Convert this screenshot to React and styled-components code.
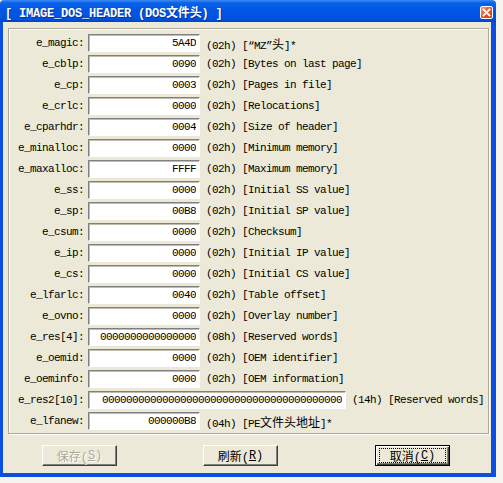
import React from 'react';
import styled, { createGlobalStyle } from 'styled-components';

const Global = createGlobalStyle`
  html, body { margin: 0; padding: 0; }
  body {
    background: #f4f3ee;
    width: 503px;
    height: 483px;
    overflow: hidden;
    font-family: "Liberation Mono", "Noto Sans CJK SC", monospace;
  }
`;

const Window = styled.div`
  width: 496px;
  height: 477px;
  display: flex;
  flex-direction: column;
`;

const TitleBar = styled.div`
  height: 22px;
  flex: 0 0 22px;
  box-sizing: border-box;
  display: flex;
  align-items: center;
  justify-content: space-between;
  padding: 1px 3px 0 5px;
  border-radius: 4px 4px 0 0;
  background: linear-gradient(#3a8cf6 0, #0a61e6 3px, #0057e6 45%, #0052de 85%, #0045cc 100%);
`;

const Title = styled.span`
  color: #fff;
  font-weight: bold;
  font-size: 12px;
  letter-spacing: -0.2px;
  white-space: pre;
  text-shadow: 1px 1px 0 #0a2f9c;
`;

const CloseBtn = styled.div`
  width: 13px;
  height: 13px;
  box-sizing: border-box;
  border: 1px solid #fff;
  border-radius: 2px;
  background: linear-gradient(135deg, #f29a7c, #e0522c 55%, #c53d18);
  display: flex;
  align-items: center;
  justify-content: center;
  margin-top: 2px;
`;

const Frame = styled.div`
  flex: 1;
  box-sizing: border-box;
  background: #ece9d8;
  border-style: solid;
  border-color: #0a4fe0;
  border-width: 0 5px 4px 3px;
  padding: 6px 2px 7px 5px;
  display: flex;
  flex-direction: column;
`;

const Group = styled.div`
  width: 481px;
  height: 406px;
  box-sizing: border-box;
  border: 1px solid #aca899;
  box-shadow: inset 1px 1px 0 #fff, 1px 1px 0 #fff;
  padding: 5px 0 3px 0;
  display: flex;
  flex-direction: column;
  gap: 3px;
`;

const Row = styled.div`
  display: flex;
  align-items: center;
  height: 18px;
  font-size: 11px;
  letter-spacing: -0.6px;
  color: #000;
  white-space: pre;
`;

const Label = styled.span`
  width: 75px;
  margin-right: 4px;
  text-align: right;
`;

const Field = styled.input`
  width: ${p => (p.$wide ? 258 : 112)}px;
  height: 18px;
  box-sizing: border-box;
  margin: 0 6px 0 0;
  padding: 0 3px 0 0;
  border-style: solid;
  border-width: 1px;
  border-color: #808080 #fff #fff #808080;
  box-shadow: inset 1px 1px 0 #c0bdb0;
  background: #fff;
  font-family: "Liberation Mono", monospace;
  font-size: 11px;
  letter-spacing: -0.6px;
  text-align: right;
  color: #000;
  outline: none;
`;

const Note = styled.span``;

const Cjk = styled.span`
  font-family: "Noto Sans CJK SC", sans-serif;
  font-size: 12px;
  letter-spacing: 0;
`;

const Buttons = styled.div`
  display: flex;
  margin-top: 11px;
  padding-left: 34px;
`;

const Btn = styled.button`
  width: 75px;
  height: 21px;
  box-sizing: border-box;
  margin: 0 0 0 ${p => p.$offset || 0}px;
  padding: 0;
  background: #ece9d8;
  border-style: solid;
  border-width: 1px;
  border-color: ${p => (p.$default ? '#000' : '#fff #404040 #404040 #fff')};
  box-shadow: ${p =>
    p.$default
      ? 'inset 1px 1px 0 #fff, inset -1px -1px 0 #404040, inset -2px -2px 0 #808080'
      : 'inset -1px -1px 0 #808080'};
  font-family: "Liberation Mono", "Noto Sans CJK SC", monospace;
  font-size: 12px;
  color: ${p => (p.disabled ? '#aca899' : '#000')};
  text-shadow: ${p => (p.disabled ? '1px 1px 0 #fff' : 'none')};
  display: flex;
  align-items: center;
  justify-content: center;
  white-space: pre;
`;

const Focus = styled.span`
  display: flex;
  align-items: center;
  justify-content: center;
  width: 65px;
  height: 13px;
  border: 1px dotted #000;
`;

const Key = styled.span`
  text-decoration: underline;
`;

const zeros = (n) => '0'.repeat(n);

// wrap the chinese parts so they keep their full 12px cell
const withCjk = (text) =>
  text.split(/([\u4e00-\u9fff]+)/).map((part, i) =>
    i % 2 ? <Cjk key={i}>{part}</Cjk> : part
  );

const rows = [
  ['e_magic', '5A4D', '02h', '[“MZ”头]*'],
  ['e_cblp', '0090', '02h', '[Bytes on last page]'],
  ['e_cp', '0003', '02h', '[Pages in file]'],
  ['e_crlc', '0000', '02h', '[Relocations]'],
  ['e_cparhdr', '0004', '02h', '[Size of header]'],
  ['e_minalloc', '0000', '02h', '[Minimum memory]'],
  ['e_maxalloc', 'FFFF', '02h', '[Maximum memory]'],
  ['e_ss', '0000', '02h', '[Initial SS value]'],
  ['e_sp', '00B8', '02h', '[Initial SP value]'],
  ['e_csum', '0000', '02h', '[Checksum]'],
  ['e_ip', '0000', '02h', '[Initial IP value]'],
  ['e_cs', '0000', '02h', '[Initial CS value]'],
  ['e_lfarlc', '0040', '02h', '[Table offset]'],
  ['e_ovno', '0000', '02h', '[Overlay number]'],
  ['e_res[4]', zeros(16), '08h', '[Reserved words]'],
  ['e_oemid', '0000', '02h', '[OEM identifier]'],
  ['e_oeminfo', '0000', '02h', '[OEM information]'],
  ['e_res2[10]', zeros(40), '14h', '[Reserved words]', true],
  ['e_lfanew', '000000B8', '04h', '[PE文件头地址]*'],
];

export default function App() {
  return (
    <>
      <Global />
      <Window>
        <TitleBar>
          <Title>[ IMAGE_DOS_HEADER (DOS文件头) ]</Title>
          <CloseBtn>
            <svg width="9" height="9" viewBox="0 0 9 9">
              <path d="M1.5 1.5 L7.5 7.5 M7.5 1.5 L1.5 7.5" stroke="#fff" strokeWidth="1.8" strokeLinecap="square" />
            </svg>
          </CloseBtn>
        </TitleBar>
        <Frame>
          <Group>
            {rows.map(([name, value, size, note, wide]) => (
              <Row key={name}>
                <Label>{name}:</Label>
                <Field readOnly value={value} $wide={wide} />
                <Note>({size}) {withCjk(note)}</Note>
              </Row>
            ))}
          </Group>
          <Buttons>
            <Btn disabled>保存(<Key>S</Key>)</Btn>
            <Btn $offset={86}>刷新(<Key>R</Key>)</Btn>
            <Btn $offset={97} $default>
              <Focus>取消(<Key>C</Key>)</Focus>
            </Btn>
          </Buttons>
        </Frame>
      </Window>
    </>
  );
}
